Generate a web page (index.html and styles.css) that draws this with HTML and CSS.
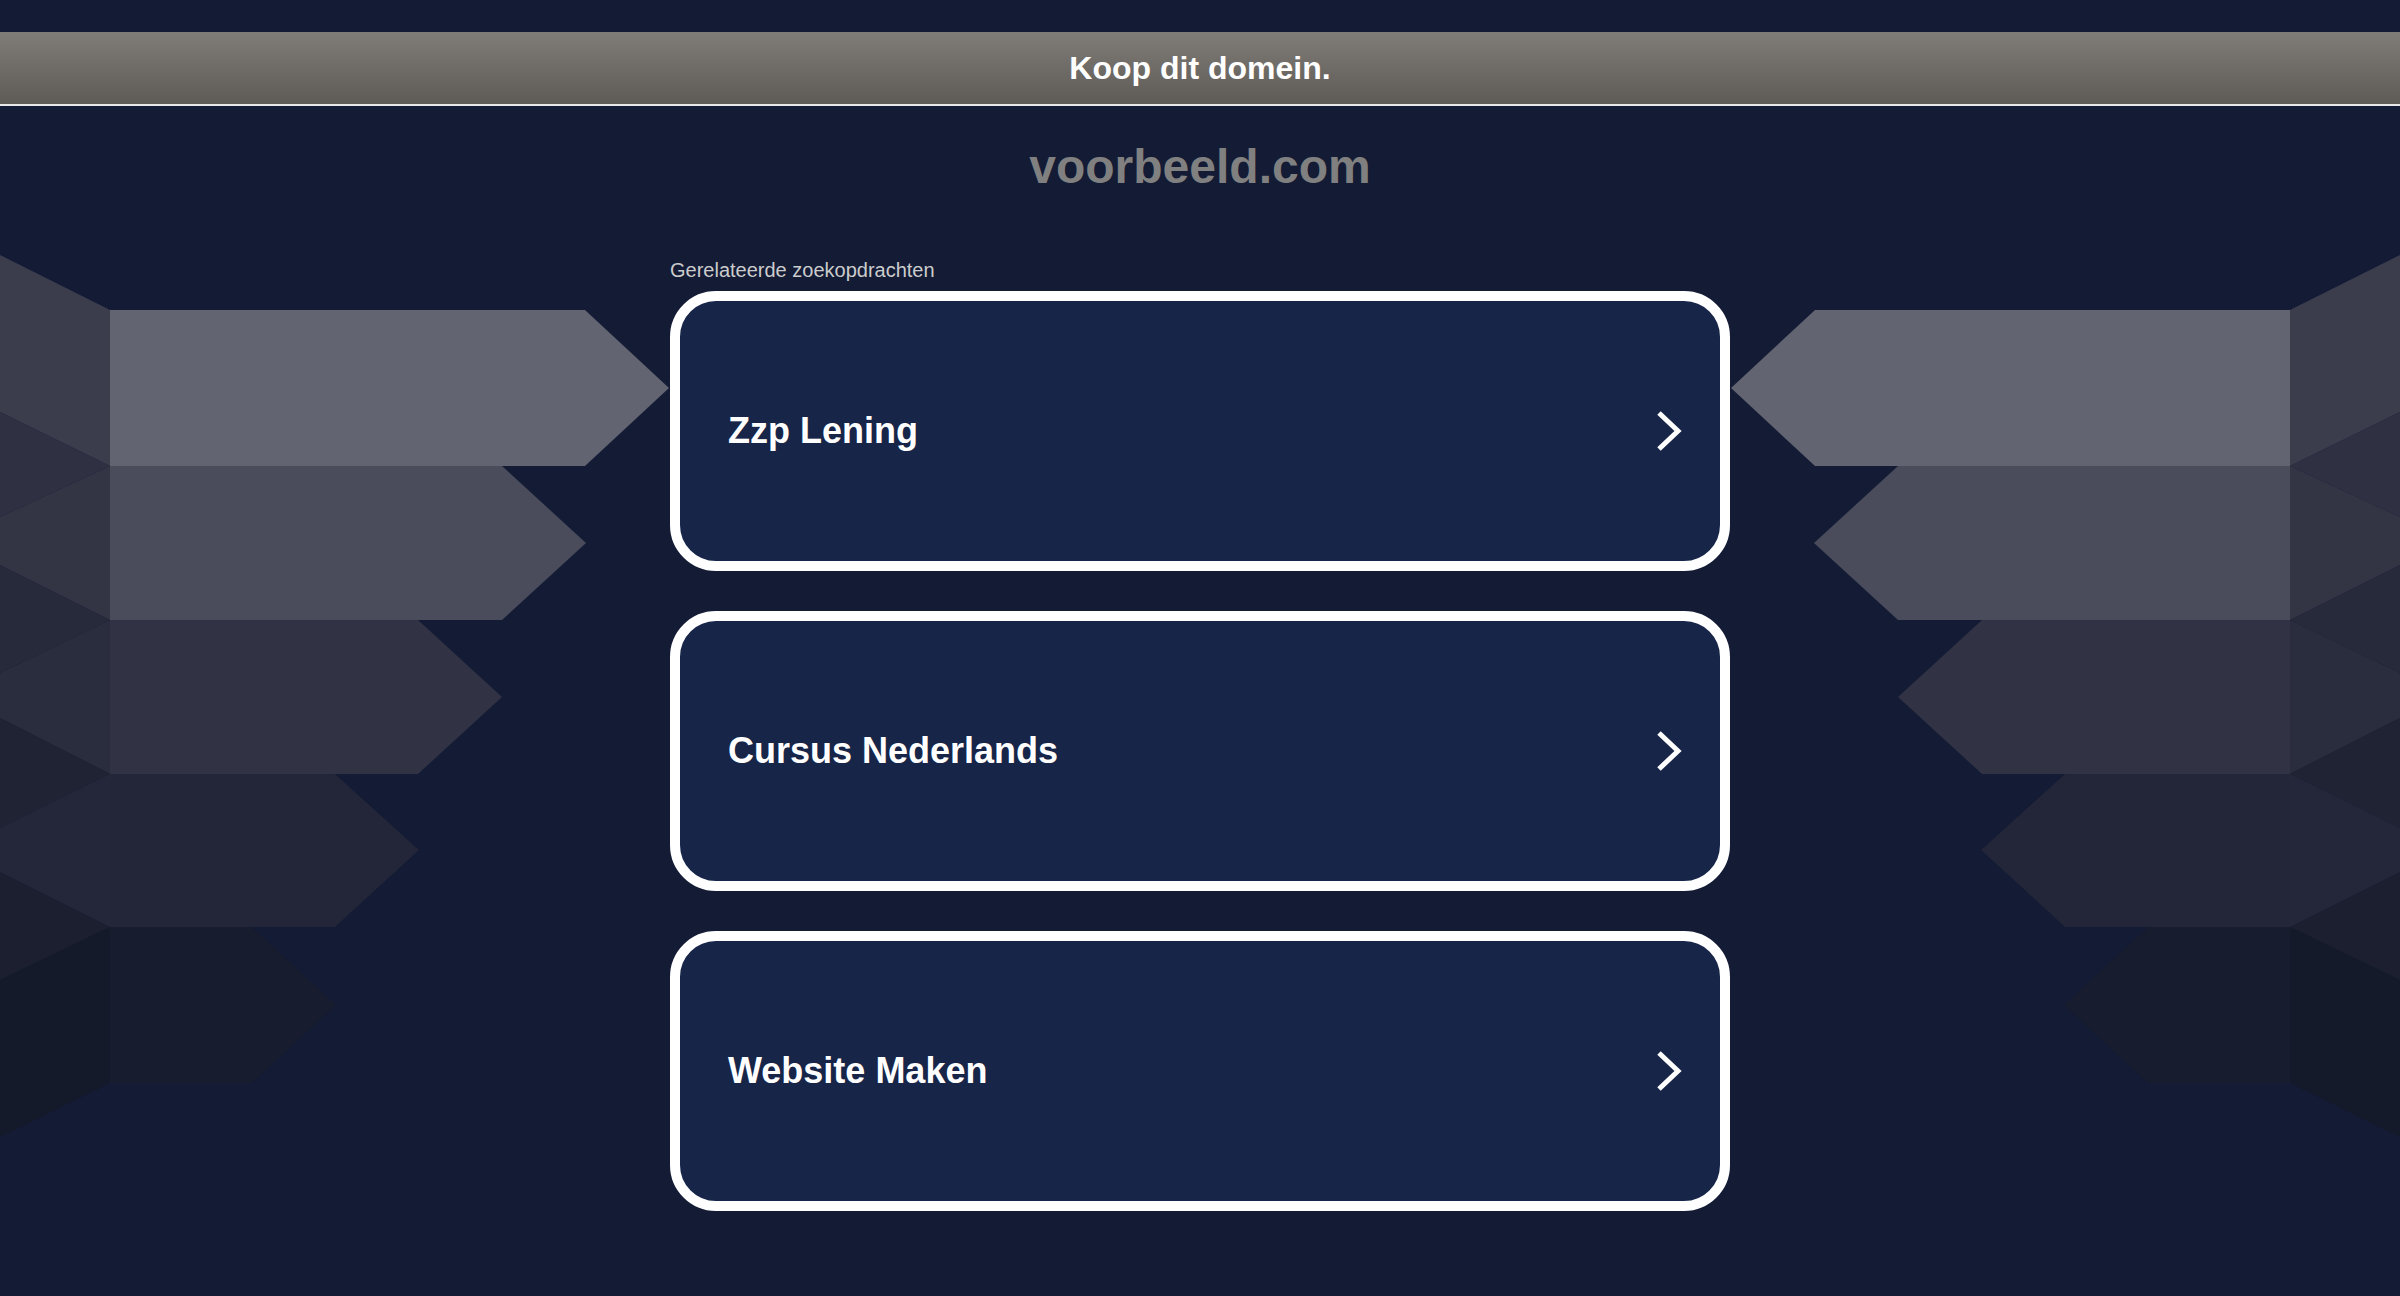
FILE: index.html
```html
<!DOCTYPE html>
<html lang="nl">
<head>
  <meta charset="UTF-8" />
  <meta name="viewport" content="width=device-width, initial-scale=1.0" />
  <title>voorbeeld.com</title>
  <link rel="stylesheet" href="styles.css">
</head>
<body>
  <svg class="backdrop" width="2400" height="1296" viewBox="0 0 2400 1296" aria-hidden="true">
    <g id="wing">
      <!-- side faces -->
      <polygon points="0,255 110,310 110,466 0,412" fill="#3b3d4c" />
      <polygon points="0,412 110,466 0,517" fill="#2f3142" />
      <polygon points="0,517 110,466 110,620 0,565" fill="#333545" />
      <polygon points="0,565 110,620 0,673" fill="#262a3b" />
      <polygon points="0,673 110,620 110,774 0,718" fill="#2a2d3e" />
      <polygon points="0,718 110,774 0,828" fill="#1f2334" />
      <polygon points="0,828 110,774 110,927 0,872" fill="#232739" />
      <polygon points="0,872 110,927 0,980" fill="#1b1f30" />
      <polygon points="0,980 110,927 110,1083 0,1137" fill="#151a2b" />
      <!-- arrows -->
      <polygon points="110,310 585,310 669,388 585,466 110,466" fill="#626471" />
      <polygon points="110,466 502,466 586,543 502,620 110,620" fill="#4a4c5c" />
      <polygon points="110,620 418,620 502,697 418,774 110,774" fill="#313344" />
      <polygon points="110,774 335,774 419,850 335,927 110,927" fill="#222638" />
      <polygon points="110,927 252,927 336,1005 252,1083 110,1083" fill="#171c2f" />
    </g>
    <use href="#wing" transform="translate(2400,0) scale(-1,1)" />
  </svg>

  <div class="buy-bar">Koop dit domein.</div>

  <main class="content">
    <h1 class="domain">voorbeeld.com</h1>

    <div class="related">
      <p class="related-title">Gerelateerde zoekopdrachten</p>

      <a class="search-card" href="#">
        <span>Zzp Lening</span>
        <svg class="chevron" width="26" height="40" viewBox="0 0 26 40"><polyline points="3,2 22,20 3,38" /></svg>
      </a>
      <a class="search-card" href="#">
        <span>Cursus Nederlands</span>
        <svg class="chevron" width="26" height="40" viewBox="0 0 26 40"><polyline points="3,2 22,20 3,38" /></svg>
      </a>
      <a class="search-card" href="#">
        <span>Website Maken</span>
        <svg class="chevron" width="26" height="40" viewBox="0 0 26 40"><polyline points="3,2 22,20 3,38" /></svg>
      </a>
    </div>
  </main>
</body>
</html>
```

FILE: styles.css
```css
:root {
  --bg: #131b35;
  --card-bg: #172549;
  --muted: #808080;
}

body {
  margin: 0;
  padding-top: 32px;
  min-height: 1296px;
  box-sizing: border-box;
  position: relative;
  background: var(--bg);
  font-family: "Liberation Sans", Arial, Helvetica, sans-serif;
  overflow: hidden;
}

.backdrop {
  position: absolute;
  top: 0;
  left: 0;
  z-index: 0;
}

.buy-bar,
.content {
  position: relative;
  z-index: 1;
}

.buy-bar {
  height: 72px;
  line-height: 72px;
  text-align: center;
  color: #fff;
  font-size: 32px;
  font-weight: bold;
  background: linear-gradient(#807c78, #5e5b57);
  border-bottom: 2px solid #e8e8e8;
}

.domain {
  margin: 37px 0 0;
  font-size: 48px;
  line-height: 48px;
  font-weight: bold;
  text-align: center;
  color: var(--muted);
}

.related {
  width: 1060px;
  margin: 69px auto 0;
}

.related-title {
  margin: 0 0 11px;
  font-size: 20px;
  line-height: 20px;
  color: #cccccc;
}

.search-card {
  display: flex;
  align-items: center;
  justify-content: space-between;
  box-sizing: border-box;
  height: 280px;
  margin-bottom: 40px;
  padding: 0 38px 0 48px;
  border: 10px solid #fff;
  border-radius: 46px;
  background: var(--card-bg);
  color: #fff;
  font-size: 36px;
  font-weight: bold;
  text-decoration: none;
}

.chevron polyline {
  fill: none;
  stroke: #fff;
  stroke-width: 5;
  stroke-linejoin: miter;
}
```
